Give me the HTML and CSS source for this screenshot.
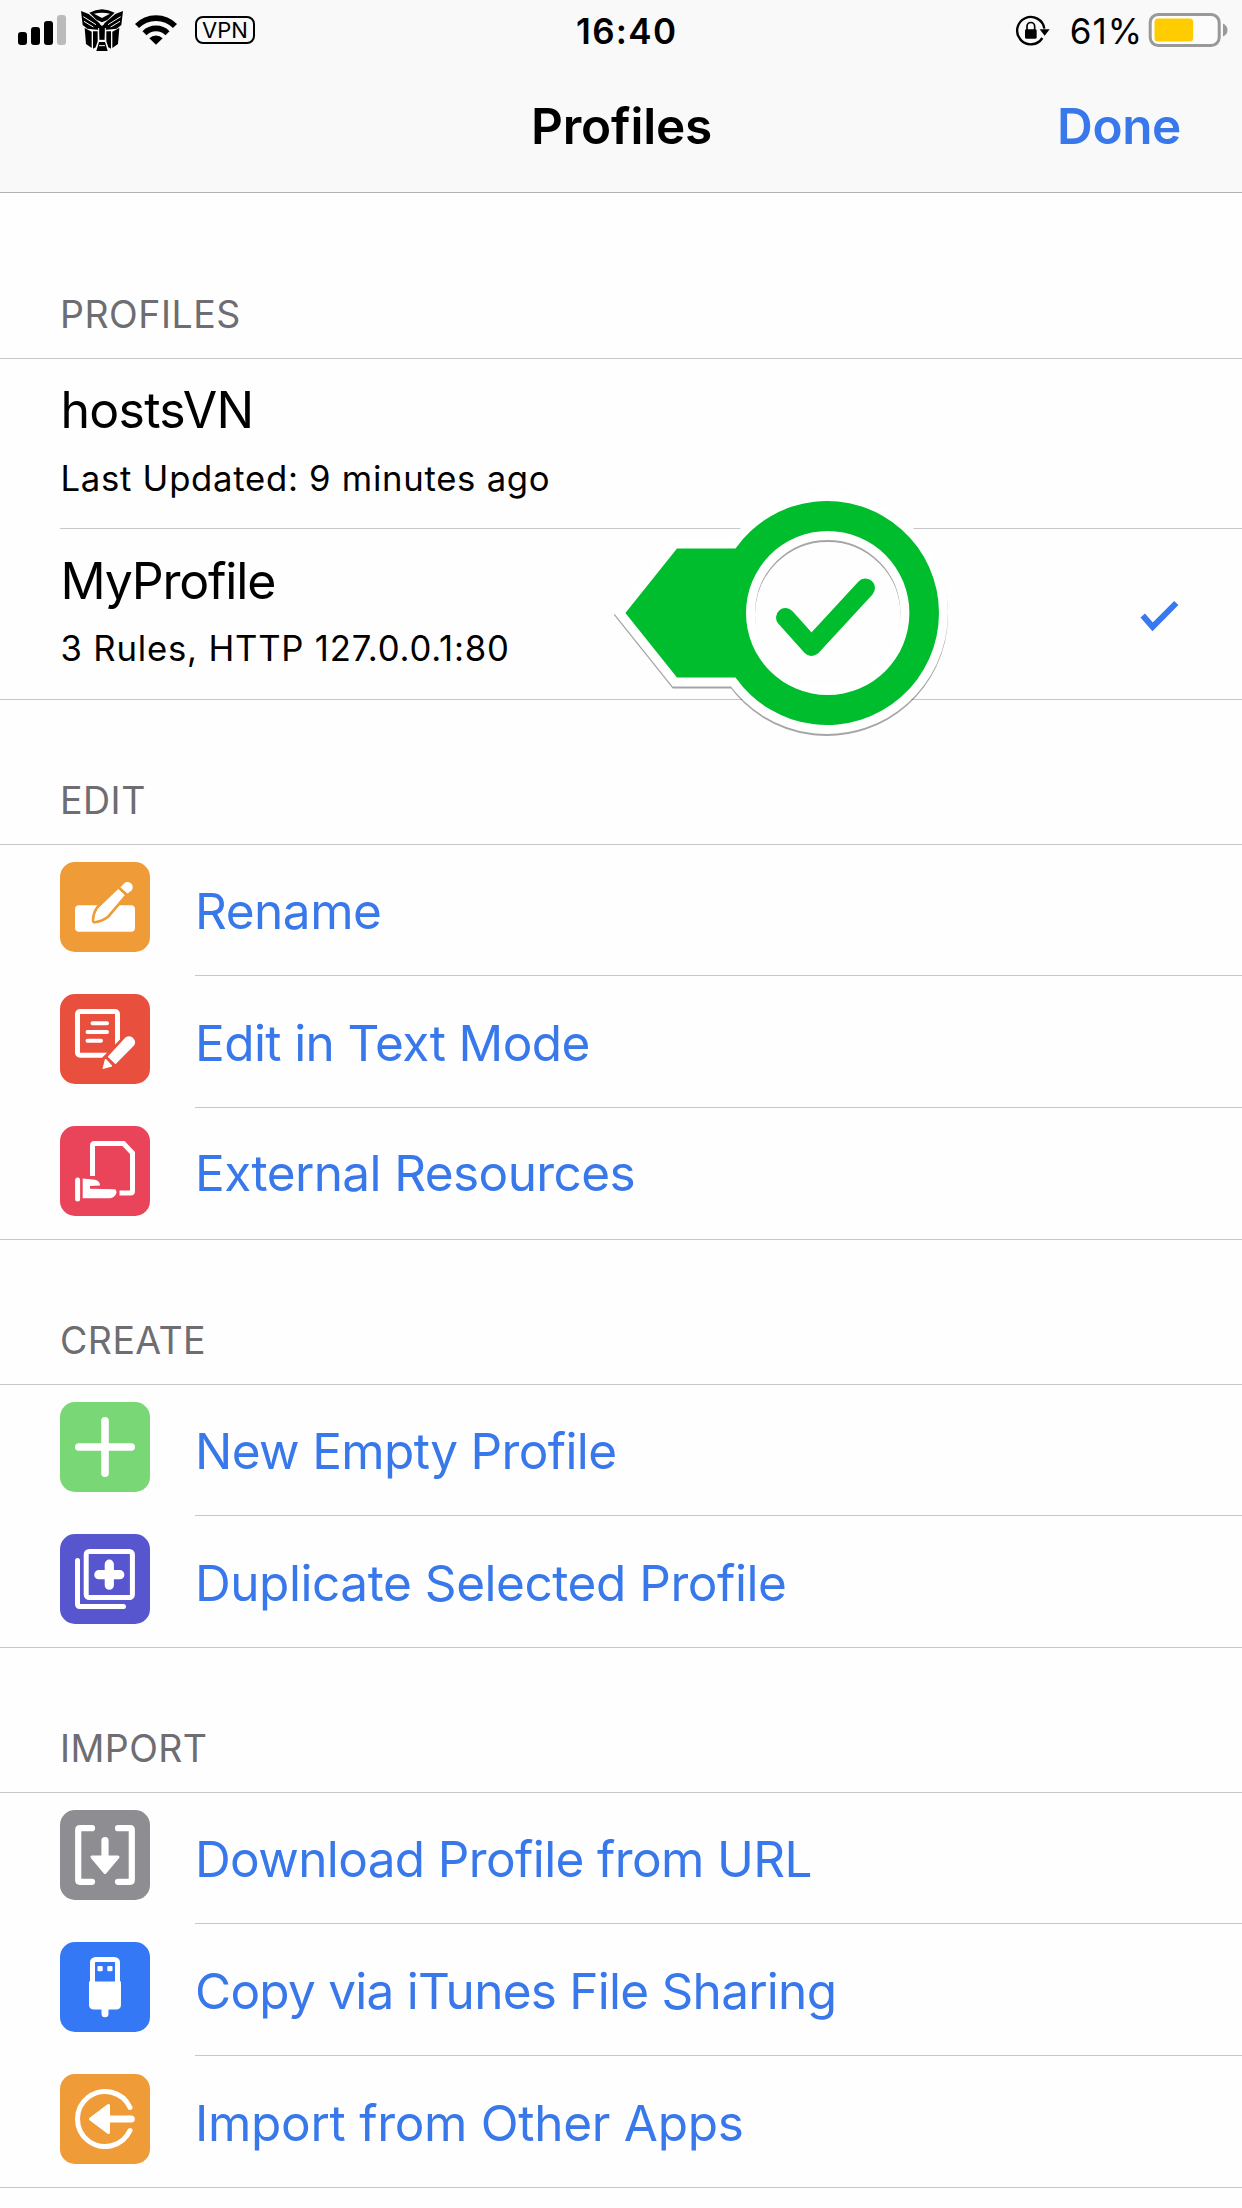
FILE: index.html
```html
<!DOCTYPE html>
<html lang="en">
<head>
<meta charset="utf-8">
<title>Profiles</title>
<link rel="stylesheet" href="styles.css">
</head>
<body>
<header class="top">
  <div class="status">
    <div class="status-left">
      <svg class="signal" width="48" height="30" viewBox="0 0 48 30"><rect x="0" y="17" width="9" height="13" rx="3"/><rect x="13" y="12" width="9" height="18" rx="3"/><rect x="26" y="6" width="9" height="24" rx="3"/><rect x="39" y="0" width="9" height="30" rx="3" fill="#bbb"/></svg>
      <svg class="carrier" width="42" height="42" viewBox="243 27 126 126">
        <path d="M268 38Q306 17 344 38L322 60L306 67L290 60Z"/>
        <path fill="#f9f9f9" d="M282 41Q306 35 330 41L306 54Z"/>
        <path d="M243 33L266 42L299 70V90L262 86L248 75Z M369 33L346 42L313 70V90L350 86L364 75Z"/>
        <path d="M254 84L275 95V144L258 132Z M358 84L337 95V144L354 132Z"/>
        <path d="M279 94H293V124L287 142L279 146Z M333 94H319V124L325 142L333 146Z"/>
        <path d="M296 70L306 78L316 70L314 120H298Z"/>
        <path d="M297 126H315L323 153H289L293 140Z"/>
        <path d="M250 50L288 74M252 64L280 81M362 50L324 74M360 64L332 81M296 84V121H316V84M297 137H315" fill="none" stroke="#f9f9f9" stroke-width="3"/>
      </svg>
      <svg class="wifi" width="42" height="30" viewBox="405 45 126 90"><g fill="none" stroke="#000" stroke-width="17"><path d="M411 78A80 80 0 0 1 525 78"/><path d="M433.500 99.500A49 49 0 0 1 502.500 99.500"/></g><path d="M468 134L448 115A28 28 0 0 1 488 115Z"/></svg>
      <span class="vpn">VPN</span>
    </div>
    <div class="time">16:40</div>
    <div class="status-right">
      <svg width="36" height="32" viewBox="30 27 108 96"><path d="M118 68A41 41 0 1 0 112 96" fill="none" stroke="#000" stroke-width="7"/><path d="M104 70H134L119 89Z"/><rect x="60" y="70" width="35" height="28" rx="4"/><path d="M66 72V61a11.500 11.500 0 0 1 23 0V72" fill="none" stroke="#000" stroke-width="5"/></svg>
      <span class="percent">61%</span>
      <svg class="battery" width="80" height="36" viewBox="0 0 80 36"><rect x="2.200" y="2.500" width="69" height="31" rx="8" fill="#fcfcfc" stroke="#999" stroke-width="3"/><rect x="6.500" y="6.500" width="38.700" height="23" rx="3.500" fill="#fc0"/><path d="M75 11.500q4.500 2 4.500 6.500t-4.500 6.500z" fill="#999"/></svg>
    </div>
  </div>
  <div class="nav">
    <span></span><h1>Profiles</h1><a class="done">Done</a>
  </div>
</header>
<main>
  <h2 class="head head-first">PROFILES</h2>
  <div class="list">
    <div class="profile">
      <div class="name">hostsVN</div>
      <div class="info">Last Updated: 9 minutes ago</div>
    </div>
    <div class="profile selected">
      <div class="name name-my">MyProfile</div>
      <div class="info info-my">3 Rules, HTTP 127.0.0.1:80</div>
      <svg class="tick" width="42" height="34" viewBox="1139 599 42 34"><path d="M1142.700 615.500L1152.600 626.800L1176.300 603" fill="none" stroke="#3878f0" stroke-width="6"/></svg>
      <svg class="pointer" width="350" height="250" viewBox="605 490 350 250">
        <path class="halo" d="M625.400 613L677 548.400H735.500A112 112 0 1 1 735.500 677.600H677ZM746 613A81.700 82 0 1 0 909.400 613A81.700 82 0 1 0 746 613Z"/>
        <path class="body" d="M625.400 613L677 548.400H735.500A112 112 0 1 1 735.500 677.600H677ZM746 613A81.700 82 0 1 0 909.400 613A81.700 82 0 1 0 746 613Z"/>
        <path class="mark" d="M785.500 617.500L811.500 646.500L865.500 588"/>
      </svg>
    </div>
  </div>

  <h2 class="head">EDIT</h2>
  <div class="list">
    <a class="row">
      <svg class="icon orange" viewBox="0 0 90 90"><rect x="15" y="43.300" width="60" height="26.500" rx="4"/><path d="M58.300 27.500L64.300 33L47 53.500Q42 57.500 34.700 58.600Q34.700 52 38.500 46.500Z" stroke="#ee9b38" stroke-width="6" stroke-linejoin="round"/><path d="M58.300 27.500L64.300 33L47 53.500Q42 57.500 34.700 58.600Q34.700 52 38.500 46.500Z" stroke="#fff" stroke-width="1" stroke-linejoin="round"/><path d="M60.300 25.200L64 21.500C69 17 75.500 23.500 71.500 28.500L67.500 31.500Z"/></svg>
      <span class="label rename">Rename</span>
    </a>
    <a class="row">
      <svg class="icon red" viewBox="0 0 90 90"><rect x="17.500" y="17.500" width="40" height="43.700" rx="2.500" fill="none" stroke="#fff" stroke-width="5"/><path d="M32.500 29.300H47M27.500 38H47M27.500 46.700H41" stroke="#fff" stroke-width="4" stroke-linecap="round"/><path d="M45 73L69 48.500" stroke="#e84f3d" stroke-width="17"/><path d="M47.700 62.700L64.500 44.500C67 41.500 71 41.500 73.500 44.500Q76.500 48 74 51.500L55.500 70.300Z"/><path d="M45.500 65L52 72L43 74.500Z" stroke="#fff" stroke-linejoin="round"/></svg>
      <span class="label text-mode">Edit in Text Mode</span>
    </a>
    <a class="row">
      <svg class="icon pink" viewBox="0 0 90 90"><path d="M32.500 50V19.500q0-2 2-2H63.500L72.500 27V65q0 2-2 2H59.500" fill="none" stroke="#fff" stroke-width="5"/><path d="M17.600 54V73" stroke="#fff" stroke-width="5" stroke-linecap="round"/><path d="M22.700 52.500L33 53.500Q40 54 40 59.500L30 60V62.800L54.500 63.300C58.500 64 56.500 72.300 49 72.300H22.700Z"/></svg>
      <span class="label external">External Resources</span>
    </a>
  </div>

  <h2 class="head head-wide">CREATE</h2>
  <div class="list">
    <a class="row">
      <svg class="icon green" viewBox="0 0 90 90"><path d="M45 18.800V71.200M18.800 45H71.200" stroke="#fff" stroke-width="7.600" stroke-linecap="round"/></svg>
      <span class="label new-empty">New Empty Profile</span>
    </a>
    <a class="row">
      <svg class="icon purple" viewBox="0 0 90 90"><g fill="none" stroke="#fff" stroke-width="5" stroke-linecap="round"><rect x="26.200" y="17.500" width="46.200" height="46" rx="3"/><path d="M17.500 26.500V70q0 2.500 2.500 2.500H63.500"/></g><path d="M49.300 30.200V51.200M38.800 40.700H59.800" stroke="#fff" stroke-width="9.200" stroke-linecap="round"/></svg>
      <span class="label duplicate">Duplicate Selected Profile</span>
    </a>
  </div>

  <h2 class="head head-wide">IMPORT</h2>
  <div class="list">
    <a class="row">
      <svg class="icon gray" viewBox="0 0 90 90"><g fill="none" stroke="#fff" stroke-width="6.200" stroke-linecap="round"><path d="M32 18.200H20q-1.800 0-1.800 1.800V70q0 1.800 1.800 1.800H32M58 18.200H70q1.800 0 1.800 1.800V70q0 1.800-1.800 1.800H58"/></g><path d="M45 30.500V50" stroke="#fff" stroke-width="7.200" stroke-linecap="round"/><path d="M32 47H58L45 62.500Z" stroke="#fff" stroke-width="3" stroke-linejoin="round"/></svg>
      <span class="label download">Download Profile from URL</span>
    </a>
    <a class="row">
      <svg class="icon blue" viewBox="0 0 90 90"><rect x="32.500" y="17.500" width="25" height="30" rx="3" fill="none" stroke="#fff" stroke-width="5"/><path d="M29 39.500H61V62.500q0 5-5 5H34q-5 0-5-5Z"/><rect x="37.500" y="24" width="5.200" height="5.200" rx="1"/><rect x="47.300" y="24" width="5.200" height="5.200" rx="1"/><path d="M45 66V71.700" stroke="#fff" stroke-width="7" stroke-linecap="round"/></svg>
      <span class="label itunes">Copy via iTunes File Sharing</span>
    </a>
    <a class="row">
      <svg class="icon orange" viewBox="0 0 90 90"><path d="M70 33.500A27.500 27.500 0 1 0 70 56.500" fill="none" stroke="#fff" stroke-width="5" stroke-linecap="round"/><path d="M48 45H71.200" stroke="#fff" stroke-width="7.200" stroke-linecap="round"/><path d="M30.500 45L48.500 31.500V58.500Z" stroke="#fff" stroke-width="3" stroke-linejoin="round"/></svg>
      <span class="label import">Import from Other Apps</span>
    </a>
  </div>
</main>
</body>
</html>
```
FILE: styles.css
```css
* { box-sizing: border-box; }

body {
  margin: 0;
  height: 2208px;
  overflow: hidden;
  background: #fefefe;
  color: #000;
  font-family: Inter, "Liberation Sans", sans-serif;
}

svg { display: block; flex: none; }

/* Status and navigation bars */
.top {
  height: 193px;
  background: #f9f9f9;
  border-bottom: 1px solid #b2b2b2;
}
.status {
  display: grid;
  grid-template-columns: 576px auto 1fr;
  align-items: center;
  height: 62px;
}
.status-left { display: flex; align-items: center; padding-left: 18px; height: 62px; }
.signal { margin-bottom: 2px; }
.carrier { margin: 0 12px 2px 15px; }
.wifi { margin-bottom: 2px; }
.vpn {
  display: flex;
  justify-content: center;
  align-items: center;
  width: 60px;
  height: 28px;
  margin: 0 0 2px 18px;
  border: 2.700px solid #000;
  border-radius: 8px;
  font-size: 22px;
}
.time { font-size: 35px; font-weight: 600; letter-spacing: 1.340px; }
.status-right {
  display: flex;
  justify-content: flex-end;
  align-items: center;
  padding-right: 14px;
}
.percent { margin: 0 5px 0 18.600px; font-size: 35px; letter-spacing: 1px; }
.battery { margin-bottom: 2px; }
.nav {
  display: grid;
  grid-template-columns: 1fr auto 1fr;
  align-items: center;
  height: 127px;
  padding: 0 61px 0 60px;
}
h1 { margin: 0 -1px 0 1px; font-size: 49.500px; font-weight: 600; letter-spacing: -0.190px; }
.done {
  justify-self: end;
  color: #3878ea;
  font-size: 49.500px;
  font-weight: 600;
  letter-spacing: -0.390px;
}

/* Section headings */
.head {
  display: flex;
  align-items: flex-end;
  height: 144px;
  margin: 0;
  padding: 0 60px 23px;
  color: #6d6d72;
  font-size: 37.500px;
  font-weight: 400;
  line-height: 40px;
  letter-spacing: 0.500px;
}
.head-first { height: 165px; }
.head-wide { letter-spacing: 0.430px; }

.list { border-top: 1px solid #c8c7cc; border-bottom: 1px solid #c8c7cc; }

/* Profiles */
.profile {
  position: relative;
  height: 170px;
  margin-left: 60px;
  padding-top: 20.500px;
  border-bottom: 1px solid #c8c7cc;
}
.selected { padding-top: 22px; border-bottom: 0; }
.name { margin-left: 0.500px; font-size: 50px; line-height: 60px; letter-spacing: -0.740px; }
.name-my { letter-spacing: -1.220px; }
.info {
  margin: 16.500px 0 0 0.500px;
  font-size: 34.700px;
  line-height: 44px;
  letter-spacing: 0.720px;
}
.info-my { margin-top: 15px; letter-spacing: 0.800px; }
.tick { position: absolute; top: 70px; right: 61px; }

/* Callout laid over the rows */
.pointer { position: absolute; top: -39px; left: 545px; z-index: 1; }
.halo {
  fill: none;
  stroke: #fff;
  stroke-width: 18px;
  filter: drop-shadow(0 2px 0.500px rgba(0, 0, 0, 0.350));
}
.body { fill: #00bd2e; fill-rule: evenodd; }
.mark {
  fill: none;
  stroke: #00bd2e;
  stroke-width: 19px;
  stroke-linecap: round;
  stroke-linejoin: round;
}

/* Action rows */
.row {
  display: flex;
  align-items: flex-end;
  gap: 45px;
  height: 132px;
  padding-left: 60px;
}
.row:first-child { height: 131px; }
.row:last-child { height: 131px; }
.icon { width: 90px; height: 90px; margin-bottom: 24px; border-radius: 15px; fill: #fff; }
.row:last-child .icon { margin-bottom: 23px; }
.label {
  flex: 1;
  padding-bottom: 34px;
  border-bottom: 1px solid #c8c7cc;
  color: #3878ea;
  font-size: 49.500px;
  line-height: 60px;
}
.row:last-child .label { border-bottom: 0; }

.orange { background: #ee9b38; }
.red { background: #e84f3d; }
.pink { background: #e9445a; }
.green { background: #79d775; }
.purple { background: #5856ce; }
.gray { background: #8e8d92; }
.blue { background: #3478f6; }

.rename { letter-spacing: -0.460px; }
.text-mode { letter-spacing: -0.590px; }
.row .external { padding-bottom: 36px; letter-spacing: -0.600px; }
.new-empty { letter-spacing: -0.640px; }
.duplicate { letter-spacing: -0.450px; }
.download { letter-spacing: -0.620px; }
.itunes { letter-spacing: -0.740px; }
.import { letter-spacing: -0.290px; }
```
